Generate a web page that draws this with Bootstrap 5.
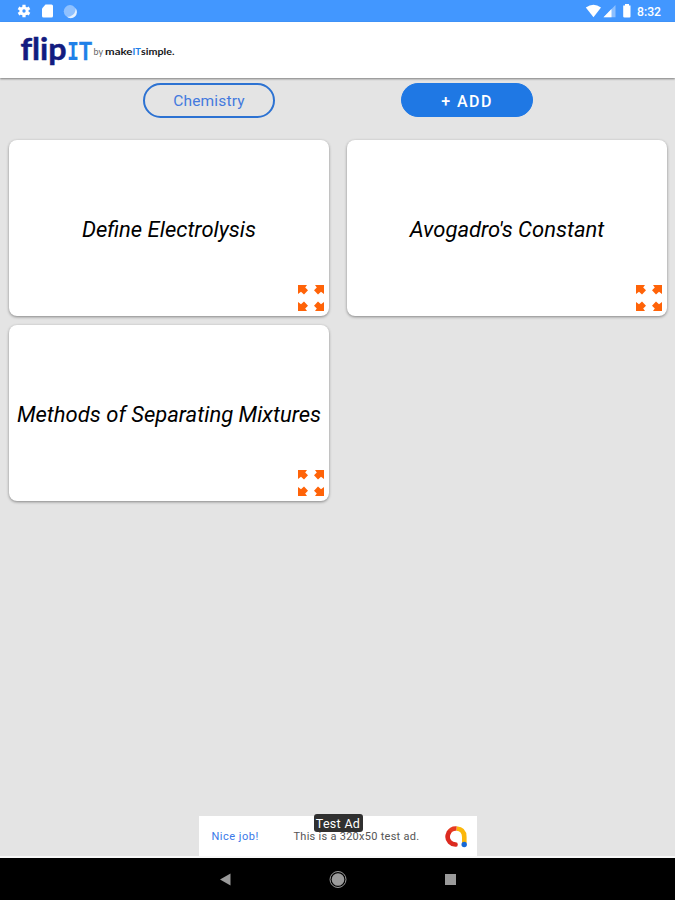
<!DOCTYPE html>
<html lang="en">
<head>
<meta charset="utf-8">
<meta name="viewport" content="width=device-width, initial-scale=1">
<title>flipIT</title>
<link href="https://cdn.jsdelivr.net/npm/bootstrap@5.3.0/dist/css/bootstrap.min.css" rel="stylesheet">
<style>
body{font-family:Roboto,"Liberation Sans",sans-serif;background:#e4e4e4;height:900px;overflow:hidden}
svg{display:block;flex:none}
.status-strip{height:22px;background:#4297ff;color:#fff;padding:0 13px 0 16px;font-size:12.5px;font-weight:500}
.app-header{height:56px;background:#fff;padding-left:20px;box-shadow:0 1px 2px rgba(0,0,0,.45);z-index:1}
.brand-main{font-variant-ligatures:none}
.actions{height:62px;padding:5px 142px 0 143px}
.pill{width:132px;height:35px;border-radius:18px;padding:3px 0 0;line-height:1}
.pill-outline{border:2px solid #2c72d2;color:#4379de;font-size:15.5px;letter-spacing:.18px}
.pill-solid{height:34px;background:#1f78e4;border:1px solid #1f78e4;color:#fff;font-size:16px;font-weight:500;letter-spacing:1.45px}
.deck{padding:0 8px 0 9px;display:grid;grid-template-columns:320px 320px;column-gap:18px;row-gap:9px}
.flashcard{height:176px;border:0;border-radius:8px;box-shadow:0 1px 3px rgba(0,0,0,.42);color:#000;font-size:22px;font-style:italic;white-space:nowrap}
.flashcard span{line-height:26px;padding-top:3px}
.expand{position:absolute;right:5px;bottom:5px}
.ad{width:278px;height:40px;background:#fff;font-size:11px;padding:2px 9px 0 13px}
.ad-tag{position:absolute;left:115px;top:-2px;width:49px;height:18px;border-radius:3px;background:#303030;color:#fff;font-size:12.5px;letter-spacing:.3px;line-height:20px;text-align:center;white-space:nowrap}
.ad-link{color:#3978e8;width:82px;letter-spacing:.5px}
.ad-copy{color:#555;letter-spacing:.27px}
.nav-strip{height:42px;background:#000}
.ad-rule{height:2px}
</style>
</head>
<body class="d-flex flex-column">
<svg width="0" height="0" class="position-absolute"><defs>
<path id="arrow" d="M0 0H9L7.2 2.4L10 5.2L6 9.600L3 6.700L0 9Z"/>
<symbol id="expand" viewBox="0 0 26 26"><g fill="#ff6308"><use href="#arrow"/><use href="#arrow" transform="translate(26 0) scale(-1 1)"/><use href="#arrow" transform="translate(0 26) scale(1 -1)"/><use href="#arrow" transform="translate(26 26) scale(-1 -1)"/></g></symbol>
</defs></svg>
<div class="status-strip d-flex justify-content-between align-items-center flex-shrink-0">
  <svg width="64" height="22" viewBox="16 0 64 22">
    <g fill="#fff"><circle cx="24" cy="11" r="4.600"/><g stroke="#fff" stroke-width="3.200"><path d="M24 4.700V17.300M18.500 7.900L29.500 14.100M29.500 7.900L18.500 14.100"/></g></g>
    <circle cx="24" cy="11" r="1.700" fill="#4297ff"/>
    <path d="M45.500 4.500H51.500Q53 4.500 53 6V16Q53 17.500 51.500 17.500H43.500Q42 17.500 42 16V8.500Z" fill="#fff"/>
    <circle cx="70" cy="11.300" r="6.200" fill="#8fc1ff"/><path d="M75.500 8A6.200 6.200 0 0 1 66.500 16.500A7.500 7.500 0 0 0 75.500 8Z" fill="#e5f1ff"/>
  </svg>
  <div class="d-flex align-items-center">
    <svg width="52" height="22" viewBox="585 0 52 22"><path d="M585.800 7.500Q593.500 2 601 7.500L593.500 17.300Z" fill="#fff"/><path d="M603.500 17.300L615.500 5V17.300Z" fill="#8dc0ff"/><path d="M603.500 17.300L611.500 9V17.300Z" fill="#fff"/><path d="M625 4H629V5.500H630.500V16.500Q630.500 17.500 629.500 17.500H624.500Q623.200 17.500 623.200 16.500V5.500H625Z" fill="#fff"/></svg>
    <svg width="25" height="22" viewBox="0 0 25 22"><text x="0" y="16" fill="#fff" textLength="24" lengthAdjust="spacingAndGlyphs">8:32</text></svg>
  </div>
</div>
<header class="app-header d-flex align-items-center flex-shrink-0 position-relative">
  <svg width="160" height="56" viewBox="20 22 160 56">
    <text class="brand-main" x="20.500" y="59.500" font-family="Lato,sans-serif" font-weight="700" font-size="30" fill="#121b80" stroke="#121b80" stroke-width=".5" textLength="46" lengthAdjust="spacingAndGlyphs">flip</text>
    <text x="67" y="59.500" font-family="'DejaVu Sans Mono',monospace" font-weight="700" font-size="24" fill="#2080e8" textLength="12" lengthAdjust="spacingAndGlyphs">I</text>
    <text x="79" y="59.500" font-family="Lato,sans-serif" font-weight="700" font-size="24.500" fill="#2080e8" stroke="#2080e8" stroke-width=".4" textLength="13" lengthAdjust="spacingAndGlyphs">T</text>
    <g font-family="Lato,sans-serif" font-size="9.500">
    <text x="93.500" y="54.500" fill="#666" font-size="9" textLength="9.500" lengthAdjust="spacingAndGlyphs">by</text>
    <text x="105" y="54.500" font-weight="700" fill="#17171b" textLength="27.500" lengthAdjust="spacingAndGlyphs">make</text>
    <text x="132.500" y="54.500" font-weight="700" fill="#2080e8" textLength="8.500" lengthAdjust="spacingAndGlyphs">IT</text>
    <text x="141" y="54.500" font-weight="700" fill="#17171b" textLength="33.500" lengthAdjust="spacingAndGlyphs">simple.</text></g>
  </svg>
</header>
<div class="actions d-flex justify-content-between flex-shrink-0">
  <button class="btn pill pill-outline">Chemistry</button>
  <button class="btn pill pill-solid">+ ADD</button>
</div>
<main class="deck flex-grow-1 align-content-start">
  <div class="card flashcard d-flex align-items-center justify-content-center"><span>Define Electrolysis</span><svg class="expand" width="26" height="26"><use href="#expand"/></svg></div>
  <div class="card flashcard d-flex align-items-center justify-content-center"><span>Avogadro's Constant</span><svg class="expand" width="26" height="26"><use href="#expand"/></svg></div>
  <div class="card flashcard d-flex align-items-center justify-content-center"><span>Methods of Separating Mixtures</span><svg class="expand" width="26" height="26"><use href="#expand"/></svg></div>
</main>
<div class="ad mx-auto d-flex align-items-center position-relative flex-shrink-0">
  <span class="ad-link">Nice job!</span><span class="ad-copy">This is a 320x50 test ad.</span>
  <svg class="ms-auto" width="24" height="24" viewBox="0 0 24 24" fill="none" stroke-width="4.600"><path d="M12.500 3.500Q20.300 4 20.300 12V18" stroke="#fbb70b"/><path d="M12.500 3.500A8.200 8.200 0 0 0 4.600 8" stroke="#e63a22"/><path d="M4.600 8Q2.200 13 5.600 16.800Q8 19.300 11.500 19.500" stroke="#dc2a20" stroke-linecap="round"/><circle cx="20.200" cy="19.500" r="2.700" fill="#1768d5"/></svg>
  <span class="ad-tag">Test Ad</span>
</div>
<div class="ad-rule bg-white flex-shrink-0 opacity-75"></div>
<nav class="nav-strip flex-shrink-0">
  <svg width="675" height="42" viewBox="0 858 675 42" fill="#9a9a9a"><path d="M220 879.500L230.500 873.500V885.500Z"/><circle cx="338" cy="879.500" r="6.300"/><circle cx="338" cy="879.500" r="8" fill="none" stroke="#9a9a9a" stroke-width="1"/><path d="M445 874H456V885H445Z"/></svg>
</nav>
<script src="https://cdn.jsdelivr.net/npm/bootstrap@5.3.0/dist/js/bootstrap.bundle.min.js"></script>
</body>
</html>
